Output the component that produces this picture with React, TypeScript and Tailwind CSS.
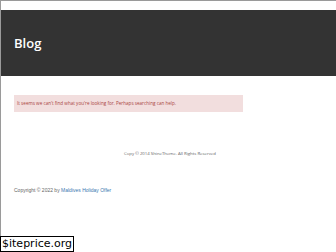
export default function App() {
  return (
    <div className="relative h-[252px] w-[336px] overflow-hidden bg-white">
      <div className="h-[252px] border-l border-t border-[#9a9a9a] pt-[9px]">
        <header className="flex h-[66px] items-center bg-[#333333] pl-[13px]">
          <h1 className="font-['Open_Sans',sans-serif] text-[13px] font-semibold leading-none text-white">
            Blog
          </h1>
        </header>
        <div className="pl-[13px] pt-[19px]">
          <div className="flex h-[17px] w-[229px] items-center bg-[#f2dede] pl-[3px] font-['Open_Sans',sans-serif] text-[4.6px] text-[#a94442]">
            It seems we can't find what you're looking for. Perhaps searching can help.
          </div>
        </div>
        <p className="mt-[38px] pl-[123px] font-['Open_Sans',sans-serif] text-[4.3px] text-[#666]">
          Copy © 2014 ShineTheme. All Rights Reserved
        </p>
        <p className="mt-[31px] pl-[13px] font-['Liberation_Sans',sans-serif] text-[5px] text-[#666]">
          Copyright © 2022 by <span className="text-[#3a78b0]">Maldives Holiday Offer</span>
        </p>
      </div>
      <div className="absolute bottom-0 left-0 border border-black bg-white px-[1px] font-['DejaVu_Sans',sans-serif] text-[11px] leading-[14px] text-black">
        $iteprice.org
      </div>
    </div>
  );
}
